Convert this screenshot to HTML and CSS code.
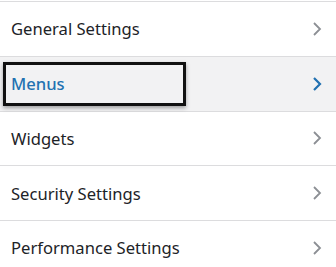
FILE: index.html
```html
<!DOCTYPE html>
<html lang="en">
<head>
    <meta charset="UTF-8">
    <title>Settings</title>
    <link rel="stylesheet" href="styles.css">
</head>
<body>
<ul class="menu">
    <li class="item"><span>General Settings</span><svg class="arrow" viewBox="0 0 10 16"><path d="M2 2l6 6-6 6"/></svg></li>
    <li class="item current"><span>Menus</span><svg class="arrow" viewBox="0 0 10 16"><path d="M2 2l6 6-6 6"/></svg><div class="mark"></div></li>
    <li class="item"><span>Widgets</span><svg class="arrow" viewBox="0 0 10 16"><path d="M2 2l6 6-6 6"/></svg></li>
    <li class="item"><span>Security Settings</span><svg class="arrow" viewBox="0 0 10 16"><path d="M2 2l6 6-6 6"/></svg></li>
    <li class="item"><span>Performance Settings</span><svg class="arrow" viewBox="0 0 10 16"><path d="M2 2l6 6-6 6"/></svg></li>
</ul>
</body>
</html>
```
FILE: styles.css
```css
* {
    padding: 0;
    margin: 0;
    list-style: none;
    border: 0;
}

body {
    background: #fff;
    font-family: "Noto Sans", "Open Sans", sans-serif;
    font-size: 16.6px;
    color: #1d2327;
}

.menu {
    border-top: 1px solid #dcdcde;
    margin-top: 1px;
}

.item {
    position: relative;
    height: 53.75px;
    padding: 0 14px 0 11px;
    border-bottom: 1px solid #dcdcde;
    display: flex;
    align-items: center;
    justify-content: space-between;
}

.arrow {
    width: 10px;
    height: 16px;
    fill: none;
    stroke: #8c8f94;
    stroke-width: 1.8;
}

.current {
    background: #f2f2f3;
    color: #2271b1;
}

.current span {
    font-weight: 500;
}

.current .arrow {
    stroke: #2271b1;
    stroke-width: 2.2;
}

.mark {
    position: absolute;
    left: 3px;
    top: 5px;
    width: 177px;
    height: 38px;
    border: 3px solid #111;
    box-shadow: 0 2px 4px rgba(0, 0, 0, 0.35);
}
```
